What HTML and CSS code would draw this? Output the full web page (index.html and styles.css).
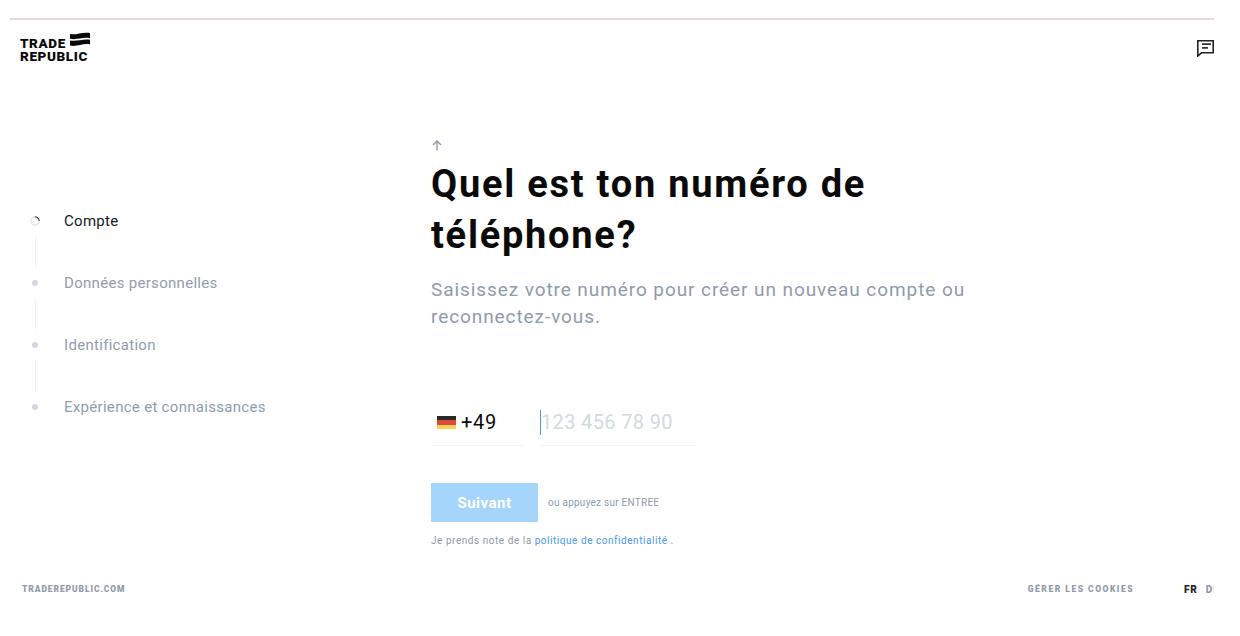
FILE: index.html
```html
<!DOCTYPE html>
<html lang="fr">
<head>
    <meta charset="UTF-8">
    <title>Trade Republic</title>
    <link rel="stylesheet" href="styles.css">
</head>
<body>
    <div class="top-line"></div>

    <header class="header">
        <a class="logo">
            <span class="logo-text">TRADE<br>REPUBLIC</span>
            <svg class="logo-flag" width="20" height="14" viewBox="0 0 20 14">
                <path d="M0 2C6 3.5 12 -0.5 20 1V6.2C13 4.8 7 8.2 0 6.8Z" fill="#0a0a0a"/>
                <path d="M0 8.4C7 9.8 13 6.4 20 7.8V12.4C13 11 7 15 0 13.6Z" fill="#0a0a0a"/>
            </svg>
        </a>
        <svg class="chat-icon" width="17" height="17" viewBox="0 0 17 17">
            <path d="M0.8 0.8H16.2V12.8H4.5L0.8 16Z" fill="none" stroke="#222" stroke-width="1.6"/>
            <path d="M5 4.2H14M5 7.9H11" stroke="#333" stroke-width="1.7"/>
        </svg>
    </header>

    <div class="layout">
        <nav class="steps">
            <div class="step active">
                <svg class="spinner" width="10" height="10" viewBox="0 0 10 10">
                    <circle cx="5" cy="5" r="4.2" fill="none" stroke="#d5d9df" stroke-width="1"/>
                    <path d="M5 0.8A4.2 4.2 0 0 1 9.2 5" fill="none" stroke="#222" stroke-width="1"/>
                </svg>
                <span>Compte</span>
            </div>
            <div class="step-line"></div>
            <div class="step"><i class="dot"></i><span>Données personnelles</span></div>
            <div class="step-line"></div>
            <div class="step"><i class="dot"></i><span>Identification</span></div>
            <div class="step-line"></div>
            <div class="step"><i class="dot"></i><span>Expérience et connaissances</span></div>
        </nav>

        <main class="content">
            <svg class="back-arrow" width="10" height="11" viewBox="0 0 10 11">
                <path d="M5 10.5V1.5M1 5L5 1L9 5" fill="none" stroke="#8f9bab" stroke-width="1.4"/>
            </svg>
            <h1>Quel est ton numéro de téléphone?</h1>
            <p class="subtitle">Saisissez votre numéro pour créer un nouveau compte ou reconnectez-vous.</p>

            <div class="phone-row">
                <div class="prefix">
                    <span class="flag"></span>
                    <span>+49</span>
                </div>
                <div class="number"><span class="caret"></span>123 456 78 90</div>
            </div>

            <div class="submit-row">
                <button class="next">Suivant</button>
                <span class="hint">ou appuyez sur ENTREE</span>
            </div>
            <p class="privacy">Je prends note de la <a>politique de confidentialité</a> .</p>
        </main>
    </div>

    <footer class="footer">
        <span>TRADEREPUBLIC.COM</span>
        <div class="footer-right">
            <span class="cookies">GÉRER LES COOKIES</span>
            <span class="lang"><b>FR</b><i></i><span>DE</span></span>
        </div>
    </footer>
</body>
</html>
```

FILE: styles.css
```css
html, body {
    margin: 0;
    height: 636px;
    overflow: hidden;
    background: #fff;
}
body {
    font-family: Roboto, "Liberation Sans", sans-serif;
    color: #0a0a0a;
}
.top-line {
    height: 2px;
    margin: 18px 26px 0 10px;
    background: #e8d9df;
}
.header {
    display: flex;
    justify-content: space-between;
    padding: 12px 26px 0 20px;
    height: 33px;
}
.logo {
    display: flex;
    align-items: flex-start;
    height: 30px;
}
.logo-text {
    font-size: 13.5px;
    font-weight: 900;
    line-height: 13px;
    letter-spacing: 0.6px;
    margin-top: 5px;
}
.logo-flag {
    margin-left: -18px;
}
.chat-icon {
    margin-top: 8px;
}

.layout {
    display: flex;
    height: 517px;
}
.steps {
    width: 431px;
    box-sizing: border-box;
    padding: 145px 0 0 30px;
    flex-shrink: 0;
}
.step {
    display: flex;
    align-items: center;
    height: 22px;
    font-size: 15px;
    letter-spacing: 0.3px;
    color: #919dad;
}
.step.active {
    color: #14181f;
}
.spinner {
    margin-right: 24px;
}
.dot {
    width: 6px;
    height: 6px;
    border-radius: 50%;
    background: #d3d8e0;
    margin: 0 26px 0 2px;
}
.step-line {
    width: 1px;
    height: 32px;
    margin: 4px 0 4px 5px;
    background: #f1f2f5;
}

.content {
    padding-top: 75px;
    width: 560px;
}
.back-arrow {
    display: block;
    margin-left: 1px;
}
h1 {
    margin: 8px 0 0;
    font-size: 38px;
    font-weight: 700;
    line-height: 51px;
    letter-spacing: 1.75px;
    width: 500px;
}
.subtitle {
    margin: 15px 0 0;
    font-size: 19px;
    line-height: 27px;
    letter-spacing: 0.92px;
    color: #8f9bab;
}
.phone-row {
    display: flex;
    gap: 15px;
    margin-top: 73px;
}
.prefix, .number {
    height: 38px;
    border-bottom: 1px solid #f1f3f6;
    display: flex;
    align-items: center;
    font-size: 20px;
    letter-spacing: 0.7px;
    padding-bottom: 4px;
}
.prefix {
    width: 88px;
    gap: 5px;
    padding-left: 6px;
}
.flag {
    width: 19px;
    height: 13px;
    background: linear-gradient(#2a2a2a 33%, #dd4a3c 33%, #dd4a3c 66%, #f8d455 66%);
}
.number {
    width: 156px;
    color: #d3d9e1;
    letter-spacing: 0.35px;
}
.caret {
    width: 1px;
    height: 25px;
    background: #4a98ee;
}
.submit-row {
    display: flex;
    align-items: center;
    gap: 10px;
    margin-top: 37px;
}
.next {
    width: 107px;
    height: 39px;
    border: none;
    border-radius: 1px;
    background: #a6d5fb;
    color: #fff;
    font-family: inherit;
    font-size: 15px;
    font-weight: 700;
    letter-spacing: 0.5px;
}
.hint {
    font-size: 10px;
    letter-spacing: 0.25px;
    color: #8f9bab;
}
.privacy {
    margin: 13px 0 0;
    font-size: 10px;
    letter-spacing: 0.54px;
    color: #8f9bab;
}
.privacy a {
    color: #4a98ee;
}

.footer {
    display: flex;
    justify-content: space-between;
    align-items: center;
    padding: 0 26px 0 22px;
    height: 14px;
    font-size: 8.5px;
    font-weight: 900;
    letter-spacing: 0.9px;
    color: #8f9bab;
}
.footer-right {
    display: flex;
    align-items: center;
    gap: 50px;
}
.cookies {
    letter-spacing: 1.5px;
}
.lang {
    display: flex;
    align-items: center;
    width: 30px;
    overflow: hidden;
    white-space: nowrap;
    font-size: 10px;
}
.lang b {
    color: #222;
    font-weight: 900;
}
.lang i {
    width: 1px;
    height: 10px;
    background: #dde1e6;
    margin: 0 4px;
}
```
